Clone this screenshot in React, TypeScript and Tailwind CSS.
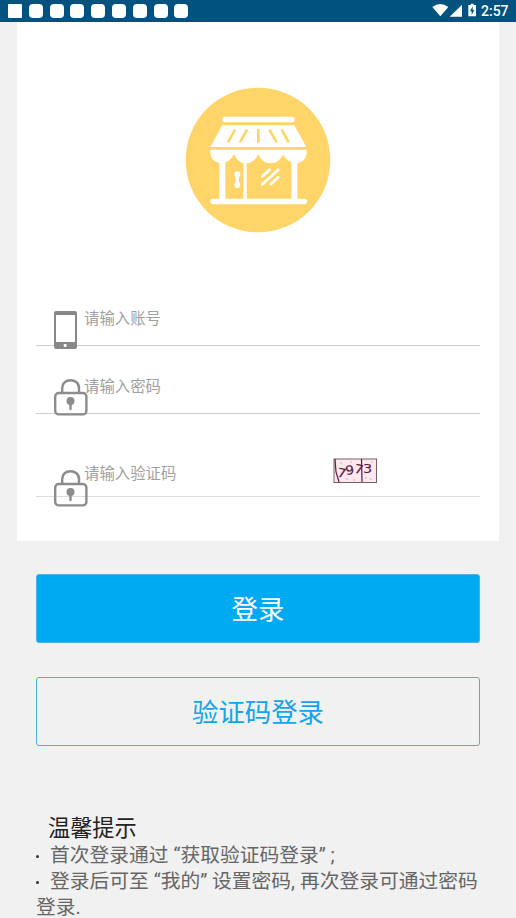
import { ReactNode } from 'react'

const notifications = [1, 2, 3, 4, 5, 6, 7, 8]

function StatusBar() {
  return (
    <header className="flex h-[21.5px] items-center justify-between bg-[#02527f] pr-[7px] pl-[8px]">
      <div className="flex items-center gap-[6.8px]">
        <span className="h-[14.5px] w-[14px] rounded-[1px] bg-white" />
        {notifications.map((n) => (
          <span key={n} className="h-[14.5px] w-[14px] rounded-[4px] bg-white" />
        ))}
      </div>
      <div className="flex items-center text-white">
        <svg width="49" height="21" viewBox="0 0 147 63" fill="currentColor">
          <path d="M1 21Q25 3 49 21L25 49Z" />
          <path d="M90 14V50H53Z" />
          <path d="M109 15h7v-4h9v4h7v34h-23Z" />
          <path d="M122 19l-8 15h5v11l8-15h-5Z" fill="#02527f" />
        </svg>
        <span className="w-[28px] pt-px font-['Roboto',sans-serif] text-[14px] leading-[21px] font-medium">2:57</span>
      </div>
    </header>
  )
}

function ShopLogo() {
  return (
    <svg className="mx-auto block" width="160" height="160" viewBox="0 0 480 480">
      <circle cx="240" cy="240" r="217" fill="#ffd569" />
      <g fill="#fff">
        <rect x="133" y="110" width="217" height="17" rx="8.5" />
        <path d="M133 136H349L385 201H97Z" />
        <path d="M97 209H386V217C386 234 374 248 359 249Q332 251 315 224Q303 249 278 250Q252 250 241 223Q229 249 204 250Q179 250 168 223Q154 251 125 249C109 247 97 234 97 217Z" />
        <rect x="124" y="235" width="18" height="126" />
        <rect x="340" y="235" width="18" height="126" />
        <rect x="196" y="240" width="10" height="120" />
        <rect x="97" y="356" width="290" height="17" rx="8.5" />
        <circle cx="178" cy="283" r="9" />
        <circle cx="178" cy="315" r="9" />
        <rect x="173" y="283" width="10" height="32" />
      </g>
      <g stroke="#ffd569" strokeWidth="8">
        <path d="M171 149L150 187M207 149L186 187M241 147V188M274 149L296 187M311 149L332 187" />
      </g>
      <g stroke="#fff" strokeWidth="8" strokeLinecap="round">
        <path d="M253 289L275 269M253 313L301 269M279 312L301 292" />
      </g>
    </svg>
  )
}

function PhoneIcon() {
  return (
    <svg className="absolute top-[21px] left-[18px]" width="23" height="38" viewBox="0 0 23 38">
      <rect width="23" height="38" rx="2" fill="#888" />
      <rect x="2" y="4" width="19" height="27" fill="#fff" />
      <rect x="9.7" y="33" width="3" height="3" rx="1" fill="#fff" />
    </svg>
  )
}

function LockIcon({ className }: { className: string }) {
  return (
    <svg className={`absolute left-[18px] ${className}`} width="34" height="37" viewBox="0 0 34 37" fill="none" stroke="#8c8c8c">
      <path d="M8.2 14V9C8.2 4 12 1.2 16.5 1.2S25 4 25 9V14" strokeWidth="2.4" />
      <rect x="1.2" y="14" width="31.2" height="21.4" rx="3.5" strokeWidth="2.4" />
      <circle cx="16.5" cy="22" r="4" fill="#8c8c8c" stroke="none" />
      <path d="M16.5 23V30" strokeWidth="2.4" strokeLinecap="round" />
    </svg>
  )
}

function Captcha() {
  return (
    <svg className="absolute top-[22px] left-[297px]" width="45" height="26" viewBox="0 0 45 26">
      <rect x="1" y="1" width="42.5" height="23.5" fill="#fbe9ee" stroke="#766066" />
      <path d="M2 1L3 14L6 24M28.5 1L29 24" stroke="#641747" strokeWidth="1.2" fill="none" />
      <g fill="#d3a2b6">
        <circle cx="8" cy="5" r=".8" />
        <circle cx="14" cy="21" r=".8" />
        <circle cx="21" cy="22" r=".8" />
        <circle cx="33" cy="20" r=".8" />
        <circle cx="39" cy="4" r=".8" />
        <circle cx="38" cy="21" r=".8" />
        <circle cx="18" cy="4" r=".8" />
      </g>
      <g fill="#641747" stroke="#641747" strokeWidth=".15" fontFamily="DejaVu Sans, sans-serif" fontSize="12.5">
        <text transform="translate(3.5 18.5) rotate(10) scale(1.15 1)">7</text>
        <text transform="translate(13 17) rotate(-8) scale(1.1 1)">9</text>
        <text transform="translate(20.5 14.5) rotate(12) scale(1.15 1)">7</text>
        <text transform="translate(30 14.5) scale(1.15 1)">3</text>
      </g>
    </svg>
  )
}

interface FieldProps {
  placeholder: string
  className: string
  children?: ReactNode
}

function Field({ placeholder, className, children }: FieldProps) {
  return (
    <div className={`relative border-b pl-[48px] text-[15.4px] leading-[22px] text-[#a0a0a0] ${className}`}>
      {placeholder}
      {children}
    </div>
  )
}

function Bullet() {
  return <span className="mr-[11px] inline-block h-[3px] w-[3px] rounded-full bg-[#333] align-[4px]" />
}

export default function App() {
  return (
    <div className="h-[918px] overflow-hidden bg-[#f1f1f1] font-['Roboto','Noto_Sans_CJK_SC',sans-serif]">
      <StatusBar />
      <main className="mx-[17px] h-[519.5px] bg-white px-[19px] pt-[58.5px]">
        <ShopLogo />
        <div className="pt-[50px]">
          <Field placeholder="请输入账号" className="h-[56px] border-[#cecece] pt-[18px]">
            <PhoneIcon />
          </Field>
          <Field placeholder="请输入密码" className="h-[68px] border-[#cecece] pt-[30px]">
            <LockIcon className="top-[33px]" />
          </Field>
          <Field placeholder="请输入验证码" className="mt-[22px] h-[60.5px] border-[#dcdcdc] pt-[27px]">
            <LockIcon className="top-[34px]" />
            <Captcha />
          </Field>
        </div>
      </main>
      <div className="flex flex-col gap-[34px] px-[36px] pt-[33px]">
        <button className="h-[69px] rounded-[3px] border border-[#45b4e4] bg-[#00aaf2] pt-[4px] text-[26.4px] text-white">登录</button>
        <button className="h-[69px] rounded-[3px] border border-[#45b4e4] pt-[4px] text-[26.4px] text-[#12a5e9]">验证码登录</button>
      </div>
      <section className="px-[36px] pt-[68px] text-[19.75px] leading-[26px] text-[#666]">
        <h2 className="mb-px pl-[12px] text-[22.2px] leading-[28px] text-[#222]">温馨提示</h2>
        <p className="whitespace-nowrap">
          <Bullet />首次登录通过 “获取验证码登录” ;
        </p>
        <p className="whitespace-nowrap">
          <Bullet />登录后可至 “我的” 设置密码, 再次登录可通过密码
          <br />
          登录.
        </p>
      </section>
    </div>
  )
}
